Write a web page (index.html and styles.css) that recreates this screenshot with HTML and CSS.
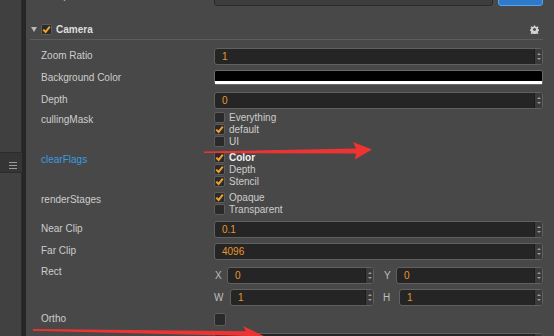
FILE: index.html
```html
<!DOCTYPE html>
<html lang="en">
  <head>
    <meta charset="UTF-8" />
    <title>Inspector - Camera</title>
    <link rel="stylesheet" href="styles.css">
  </head>
  <body>
    <aside class="sidebar">
      <div class="side-top"></div>
      <div class="side-bar">
        <span class="menu"><i></i><i></i><i></i></span>
      </div>
      <div class="side-bottom"></div>
    </aside>
    <div class="split"></div>

    <main class="inspector">
      <div class="prop prop-cut">
        <span class="prop-label">Group</span>
        <div class="prop-value group-value">
          <div class="select">Default</div>
          <div class="edit-btn">Edit</div>
        </div>
      </div>

      <div class="section-head">
        <span class="fold"></span>
        <span class="check on"><svg viewBox="0 0 9 9"><path d="M1.3 4.6 L3.6 7 L7.8 1.6" /></svg></span>
        <span class="section-title">Camera</span>
        <svg class="gear" viewBox="0 0 10 10">
          <path d="M4.2 0.5h1.6l0.3 1.4 1 0.4 1.2-0.8 1.1 1.1-0.8 1.2 0.4 1 1.4 0.3v1.6l-1.4 0.3-0.4 1 0.8 1.2-1.1 1.1-1.2-0.8-1 0.4-0.3 1.4h-1.6l-0.3-1.4-1-0.4-1.2 0.8-1.1-1.1 0.8-1.2-0.4-1-1.4-0.3v-1.6l1.4-0.3 0.4-1-0.8-1.2 1.1-1.1 1.2 0.8 1-0.4z M5 3.4a1.6 1.6 0 1 0 0.01 0z" />
        </svg>
      </div>

      <div class="prop first">
        <span class="prop-label">Zoom Ratio</span>
        <div class="prop-value">
          <div class="num"><span class="num-text">1</span><span class="spin"><i class="up"></i><i class="down"></i></span></div>
        </div>
      </div>
      <div class="prop">
        <span class="prop-label">Background Color</span>
        <div class="prop-value">
          <div class="color-field"><span class="alpha"></span></div>
        </div>
      </div>
      <div class="prop">
        <span class="prop-label">Depth</span>
        <div class="prop-value">
          <div class="num"><span class="num-text">0</span><span class="spin"><i class="up"></i><i class="down"></i></span></div>
        </div>
      </div>

      <div class="prop list">
        <span class="prop-label">cullingMask</span>
        <div class="prop-value">
          <div class="opt"><span class="check"></span>Everything</div>
          <div class="opt"><span class="check on"><svg viewBox="0 0 9 9"><path d="M1.3 4.6 L3.6 7 L7.8 1.6" /></svg></span>default</div>
          <div class="opt"><span class="check"></span>UI</div>
        </div>
      </div>
      <div class="prop list">
        <span class="prop-label active">clearFlags</span>
        <div class="prop-value">
          <div class="opt strong"><span class="check on"><svg viewBox="0 0 9 9"><path d="M1.3 4.6 L3.6 7 L7.8 1.6" /></svg></span>Color</div>
          <div class="opt"><span class="check on"><svg viewBox="0 0 9 9"><path d="M1.3 4.6 L3.6 7 L7.8 1.6" /></svg></span>Depth</div>
          <div class="opt"><span class="check on"><svg viewBox="0 0 9 9"><path d="M1.3 4.6 L3.6 7 L7.8 1.6" /></svg></span>Stencil</div>
        </div>
      </div>
      <div class="prop list">
        <span class="prop-label">renderStages</span>
        <div class="prop-value">
          <div class="opt"><span class="check on"><svg viewBox="0 0 9 9"><path d="M1.3 4.6 L3.6 7 L7.8 1.6" /></svg></span>Opaque</div>
          <div class="opt"><span class="check"></span>Transparent</div>
        </div>
      </div>

      <div class="prop after-list">
        <span class="prop-label">Near Clip</span>
        <div class="prop-value">
          <div class="num"><span class="num-text">0.1</span><span class="spin"><i class="up"></i><i class="down"></i></span></div>
        </div>
      </div>
      <div class="prop">
        <span class="prop-label">Far Clip</span>
        <div class="prop-value">
          <div class="num"><span class="num-text">4096</span><span class="spin"><i class="up"></i><i class="down"></i></span></div>
        </div>
      </div>

      <div class="prop rect">
        <span class="prop-label">Rect</span>
        <div class="prop-value rect-grid">
          <div class="axis"><span class="axis-label">X</span><div class="num"><span class="num-text">0</span><span class="spin"><i class="up"></i><i class="down"></i></span></div></div>
          <div class="axis"><span class="axis-label">Y</span><div class="num"><span class="num-text">0</span><span class="spin"><i class="up"></i><i class="down"></i></span></div></div>
          <div class="axis"><span class="axis-label wide">W</span><div class="num"><span class="num-text">1</span><span class="spin"><i class="up"></i><i class="down"></i></span></div></div>
          <div class="axis"><span class="axis-label wide">H</span><div class="num"><span class="num-text">1</span><span class="spin"><i class="up"></i><i class="down"></i></span></div></div>
        </div>
      </div>

      <div class="prop">
        <span class="prop-label">Ortho</span>
        <div class="prop-value">
          <span class="check big"></span>
        </div>
      </div>
      <div class="prop">
        <span class="prop-label">Ortho Height</span>
        <div class="prop-value">
          <div class="num"><span class="num-text">10</span><span class="spin"><i class="up"></i><i class="down"></i></span></div>
        </div>
      </div>
    </main>

    <!-- red annotation arrows drawn over the screenshot -->
    <svg class="annotations" viewBox="0 0 554 336">
      <polygon points="204,151.6 356,148.4 353,142 372,149.6 355,159.5 356,153.4 204,153" />
      <polygon points="33,329 246,331.2 243,326 270,339 241,347 245,336 33,330.8" />
    </svg>
  </body>
</html>
```

FILE: styles.css
```css
/* Reset default styles */
* {
  margin: 0;
  padding: 0;
  box-sizing: border-box;
}

body {
  font-family: "Liberation Sans", Arial, sans-serif;
  font-size: 10px;
  color: #cdcdcd;
  background-color: #484848;
  width: 554px;
  height: 336px;
  overflow: hidden;
  display: flex;
  position: relative;
}

/* left hierarchy panel */
.sidebar {
  width: 22px;
  flex: none;
  display: flex;
  flex-direction: column;
  background-color: #3c3c3c;
}

.side-top {
  height: 153px;
  border-right: 1px solid #2c2c2c;
  border-bottom: 1px solid #2c2c2c;
  background-color: #404040;
}

.side-bar {
  height: 19px;
  background-color: #353535;
  display: flex;
  align-items: center;
  justify-content: flex-end;
  padding: 5px 5px 0 0;
}

.menu {
  display: flex;
  flex-direction: column;
  gap: 2px;
}

.menu i {
  display: block;
  width: 8px;
  height: 1px;
  background-color: #9a9a9a;
}

.side-bottom {
  flex: 1;
  background-color: #414141;
  border-right: 1px solid #2c2c2c;
  border-top: 1px solid #2c2c2c;
}

.split {
  width: 4px;
  flex: none;
  background-color: #262626;
}

/* inspector */
.inspector {
  flex: 1;
  padding: 0 11px 0 15px;
}

.prop {
  display: flex;
  align-items: center;
  height: 22px;
}

.prop-label {
  width: 173px;
  flex: none;
  line-height: 12px;
}

.prop-label.active {
  color: #3a9ae0;
}

.prop-value {
  flex: 1;
  min-width: 0;
}

.prop-cut {
  margin-top: -15px;
}

.group-value {
  display: flex;
  gap: 5px;
}

.select {
  flex: 1;
  height: 19px;
  line-height: 17px;
  padding-left: 8px;
  border: 1px solid #2a2a2a;
  border-radius: 3px;
  background-color: #3d3d3d;
}

.edit-btn {
  width: 45px;
  height: 19px;
  line-height: 17px;
  text-align: center;
  color: #fff;
  border: 1px solid #5aa2ea;
  border-radius: 3px;
  background-color: #2d7acb;
}

.section-head {
  display: flex;
  align-items: center;
  height: 20px;
  margin: 13px 0 0 -11px;
  padding: 0 4px 0 1px;
  border-bottom: 1px solid #5c5c5c;
}

.fold {
  width: 0;
  height: 0;
  border-left: 3px solid transparent;
  border-right: 3px solid transparent;
  border-top: 5px solid #b8b8b8;
  margin-right: 4px;
}

.section-title {
  font-weight: bold;
  color: #dedede;
  margin-left: 4px;
  flex: 1;
}

.gear {
  width: 9px;
  height: 9px;
  fill: #d2d2d2;
  fill-rule: evenodd;
}

.prop.first {
  margin-top: 5px;
}

/* number input with spinner */
.num {
  display: flex;
  height: 17px;
  border: 1px solid #606060;
  border-radius: 3px;
  background-color: #252525;
  overflow: hidden;
}

.num-text {
  flex: 1;
  padding-left: 7px;
  line-height: 15px;
  color: #e8962f;
}

.spin {
  width: 8px;
  flex: none;
  display: flex;
  flex-direction: column;
  align-items: center;
  justify-content: center;
  gap: 3px;
  background-color: #3b3b3b;
  border-left: 1px solid #1c1c1c;
}

.spin i {
  display: block;
  width: 0;
  height: 0;
  border-left: 2px solid transparent;
  border-right: 2px solid transparent;
}

.spin .up {
  border-bottom: 2px solid #9c9c9c;
}

.spin .down {
  border-top: 2px solid #9c9c9c;
}

.color-field {
  height: 15px;
  margin-bottom: 2px;
  border: 1px solid #6a6a6a;
  border-radius: 2px;
  background-color: #000;
  display: flex;
  align-items: flex-end;
}

.alpha {
  flex: 1;
  height: 3px;
  background-color: #fff;
}

/* checkbox lists */
.prop.list {
  height: auto;
  align-items: flex-start;
  margin-bottom: 4px;
}

.prop.list .prop-label {
  padding-top: 3px;
}

.opt {
  display: flex;
  align-items: center;
  gap: 4px;
  height: 12px;
}

.opt.strong {
  color: #f2f2f2;
  font-weight: bold;
}

.check {
  width: 11px;
  height: 11px;
  flex: none;
  display: flex;
  align-items: center;
  justify-content: center;
  border: 1px solid #5c5c5c;
  border-radius: 2px;
  background-color: #2a2a2a;
}

.check svg {
  width: 9px;
  height: 9px;
  fill: none;
  stroke: #f4a22c;
  stroke-width: 2;
}

.check.big {
  width: 12px;
  height: 13px;
  display: block;
  margin-top: 1px;
}

.after-list {
  margin-top: -1px;
}

/* rect x/y/w/h */
.prop.rect {
  height: auto;
  align-items: flex-start;
  margin-top: 2px;
}

.prop.rect .prop-label {
  padding-top: 2px;
}

.rect-grid {
  display: grid;
  grid-template-columns: 1fr 1fr;
  column-gap: 9px;
}

.axis {
  display: flex;
  align-items: center;
  height: 22px;
}

.axis-label {
  width: 13px;
  padding-left: 1px;
  flex: none;
  color: #bdbdbd;
}

.axis-label.wide {
  width: 16px;
  padding-left: 0;
}

.axis .num {
  flex: 1;
}

.annotations {
  position: absolute;
  left: 0;
  top: 0;
  width: 554px;
  height: 336px;
  fill: #ee3333;
  pointer-events: none;
}
```
